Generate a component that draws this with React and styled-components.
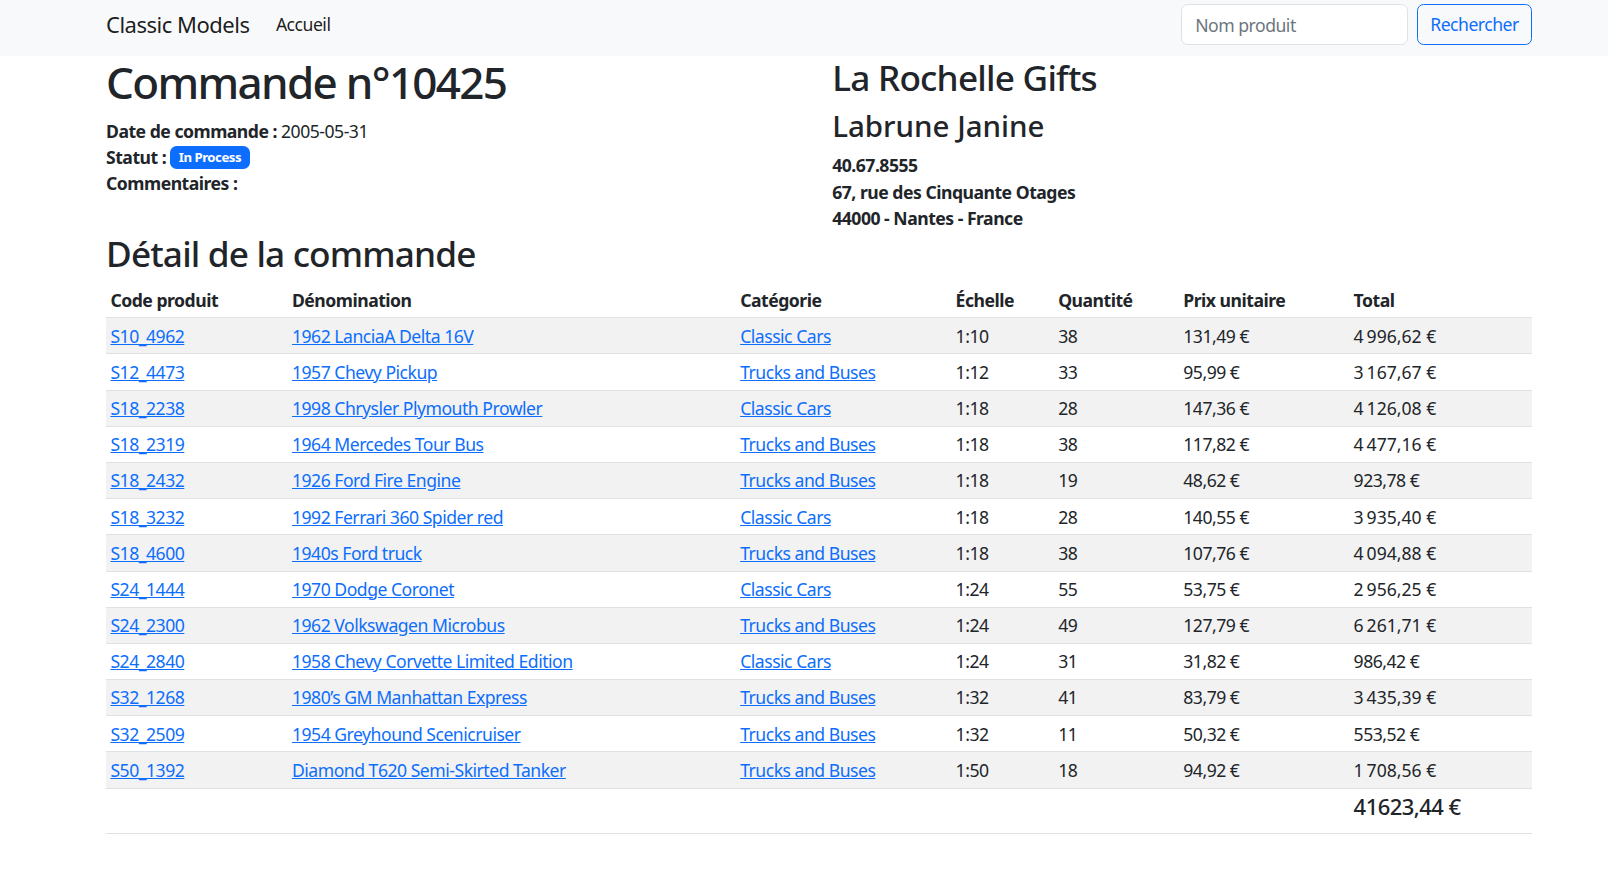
import React from "react";
import styled, { createGlobalStyle } from "styled-components";

const GlobalStyle = createGlobalStyle`
	html, body {
		margin: 0;
		padding: 0;
		background: #fff;
	}
	body {
		font-family: "Noto Sans", "Open Sans", sans-serif;
		font-size: 17.6px;
		line-height: 1.5;
		letter-spacing: -0.028em;
		color: #212529;
	}
	* {
		box-sizing: border-box;
	}
`;

const lines = [
	["S10_4962", "1962 LanciaA Delta 16V", "Classic Cars", "1:10", 38, 131.49],
	["S12_4473", "1957 Chevy Pickup", "Trucks and Buses", "1:12", 33, 95.99],
	["S18_2238", "1998 Chrysler Plymouth Prowler", "Classic Cars", "1:18", 28, 147.36],
	["S18_2319", "1964 Mercedes Tour Bus", "Trucks and Buses", "1:18", 38, 117.82],
	["S18_2432", "1926 Ford Fire Engine", "Trucks and Buses", "1:18", 19, 48.62],
	["S18_3232", "1992 Ferrari 360 Spider red", "Classic Cars", "1:18", 28, 140.55],
	["S18_4600", "1940s Ford truck", "Trucks and Buses", "1:18", 38, 107.76],
	["S24_1444", "1970 Dodge Coronet", "Classic Cars", "1:24", 55, 53.75],
	["S24_2300", "1962 Volkswagen Microbus", "Trucks and Buses", "1:24", 49, 127.79],
	["S24_2840", "1958 Chevy Corvette Limited Edition", "Classic Cars", "1:24", 31, 31.82],
	["S32_1268", "1980\u2019s GM Manhattan Express", "Trucks and Buses", "1:32", 41, 83.79],
	["S32_2509", "1954 Greyhound Scenicruiser", "Trucks and Buses", "1:32", 11, 50.32],
	["S50_1392", "Diamond T620 Semi-Skirted Tanker", "Trucks and Buses", "1:50", 18, 94.92],
];

// montants en centimes -> "4 996,62 €"
const euros = (cents, sep = "\u202f") => {
	const whole = Math.floor(cents / 100)
		.toString()
		.replace(/\B(?=(\d{3})+(?!\d))/g, sep);
	const dec = String(cents % 100).padStart(2, "0");
	return `${whole},${dec}\u00a0€`;
};

const columns = [
	["Code produit", 181.5],
	["Dénomination", 448.1],
	["Catégorie", 215.4],
	["Échelle", 102.5],
	["Quantité", 125.1],
	["Prix unitaire", 170.3],
	["Total", 182.7],
];

const App = () => {
	const rows = lines.map(([code, name, cat, scale, qty, price]) => {
		const unit = Math.round(price * 100);
		return { code, name, cat, scale, qty, unit, total: unit * qty };
	});
	const sum = rows.reduce((acc, r) => acc + r.total, 0);

	return (
		<>
			<GlobalStyle />
			<Navbar>
				<NavInner>
					<Brand href="#">Classic Models</Brand>
					<NavLink href="#">Accueil</NavLink>
					<SearchForm onSubmit={(e) => e.preventDefault()}>
						<SearchInput type="search" placeholder="Nom produit" />
						<SearchButton type="submit">Rechercher</SearchButton>
					</SearchForm>
				</NavInner>
			</Navbar>
			<Main>
				<InfoRow>
					<Column>
						<Title>Commande n°10425</Title>
						<Line>
							<strong>Date de commande :</strong> 2005-05-31
						</Line>
						<Line>
							<strong>Statut :</strong> <Badge>In Process</Badge>
						</Line>
						<Line>
							<strong>Commentaires :</strong>
						</Line>
					</Column>
					<Column>
						<Customer>La Rochelle Gifts</Customer>
						<Contact>Labrune Janine</Contact>
						<Line $bold>40.67.8555</Line>
						<Line $bold>67, rue des Cinquante Otages</Line>
						<Line $bold>44000 - Nantes - France</Line>
					</Column>
				</InfoRow>
				<SectionTitle>Détail de la commande</SectionTitle>
				<Table>
					<colgroup>
						{columns.map(([label, w]) => (
							<col key={label} style={{ width: w }} />
						))}
					</colgroup>
					<thead>
						<tr>
							{columns.map(([label]) => (
								<Th key={label}>{label}</Th>
							))}
						</tr>
					</thead>
					<tbody>
						{rows.map((r, i) => (
							<Row key={r.code} $striped={i % 2 === 0}>
								<Td>
									<Link href="#">{r.code}</Link>
								</Td>
								<Td>
									<Link href="#">{r.name}</Link>
								</Td>
								<Td>
									<Link href="#">{r.cat}</Link>
								</Td>
								<Td>{r.scale}</Td>
								<Td>{r.qty}</Td>
								<Td>{euros(r.unit)}</Td>
								<Td>{euros(r.total)}</Td>
							</Row>
						))}
						<Row>
							<Td />
							<Td />
							<Td />
							<Td />
							<Td />
							<Td />
							<Td>
								<GrandTotal>{euros(sum, "")}</GrandTotal>
							</Td>
						</Row>
					</tbody>
				</Table>
			</Main>
		</>
	);
};

export default App;

const Navbar = styled.nav`
	background: #f8f9fa;
	height: 56px;
`;

const NavInner = styled.div`
	height: 100%;
	padding: 0 76px 7px 106px;
	display: flex;
	align-items: center;
`;

const Brand = styled.a`
	font-size: 22px;
	color: rgba(0, 0, 0, 0.9);
	text-decoration: none;
	margin-right: 17.6px;
`;

const NavLink = styled.a`
	padding: 8.8px;
	color: rgba(0, 0, 0, 0.9);
	text-decoration: none;
`;

const SearchForm = styled.form`
	margin-left: auto;
	display: flex;
	gap: 9px;
`;

const SearchInput = styled.input`
	width: 227px;
	height: 41px;
	padding: 6.6px 13.2px;
	font: inherit;
	letter-spacing: inherit;
	color: #212529;
	background: #fff;
	border: 1px solid #dee2e6;
	border-radius: 6.6px;
	outline: none;
	&::placeholder {
		color: #6c757d;
	}
`;

const SearchButton = styled.button`
	width: 115px;
	height: 41px;
	font: inherit;
	letter-spacing: inherit;
	color: #0d6efd;
	background: transparent;
	border: 1px solid #0d6efd;
	border-radius: 6.6px;
	cursor: pointer;
`;

const Main = styled.main`
	padding: 0 76px 0 106px;
`;

const InfoRow = styled.div`
	display: grid;
	grid-template-columns: 1fr 1fr;
	column-gap: 26.4px;
`;

const Column = styled.div`
	display: flex;
	flex-direction: column;
`;

const Title = styled.h1`
	font-size: 44px;
	font-weight: 500;
	line-height: 1.2;
	letter-spacing: -0.038em;
	margin: 0 0 8.8px;
`;

const Customer = styled.h2`
	font-size: 35.2px;
	font-weight: 500;
	line-height: 1.2;
	letter-spacing: -0.022em;
	margin: 0 0 9.8px;
`;

const Contact = styled.h3`
	font-size: 29.5px;
	font-weight: 500;
	line-height: 1.2;
	letter-spacing: 0;
	margin: 0 0 9px;
`;

const Line = styled.div`
	font-weight: ${(props) => (props.$bold ? 700 : 400)};
	strong {
		font-weight: 700;
	}
`;

const Badge = styled.span`
	display: inline-block;
	padding: 4.6px 8.6px;
	font-size: 13.2px;
	font-weight: 700;
	line-height: 1;
	color: #fff;
	background: #0d6efd;
	border-radius: 6.6px;
	vertical-align: 2px;
`;

const SectionTitle = styled.h2`
	font-size: 35.2px;
	font-weight: 500;
	line-height: 1.2;
	letter-spacing: -0.024em;
	margin: 0.5px 0 7.8px;
`;

const Table = styled.table`
	width: 100%;
	table-layout: fixed;
	border-collapse: collapse;
	margin-bottom: 17.6px;
`;

const Th = styled.th`
	text-align: left;
	font-weight: 700;
	padding: 4.4px;
	border-bottom: 1px solid #dee2e6;
`;

const Row = styled.tr`
	background: ${(props) => (props.$striped ? "#f2f2f2" : "transparent")};
`;

const Td = styled.td`
	padding: 4.4px;
	border-bottom: 1px solid #dee2e6;
	vertical-align: top;
`;

const Link = styled.a`
	color: #0d6efd;
	text-decoration: underline;
`;

const GrandTotal = styled.h5`
	font-size: 22px;
	font-weight: 500;
	line-height: 1.2;
	letter-spacing: -0.025em;
	margin: 0 0 8.8px;
`;
